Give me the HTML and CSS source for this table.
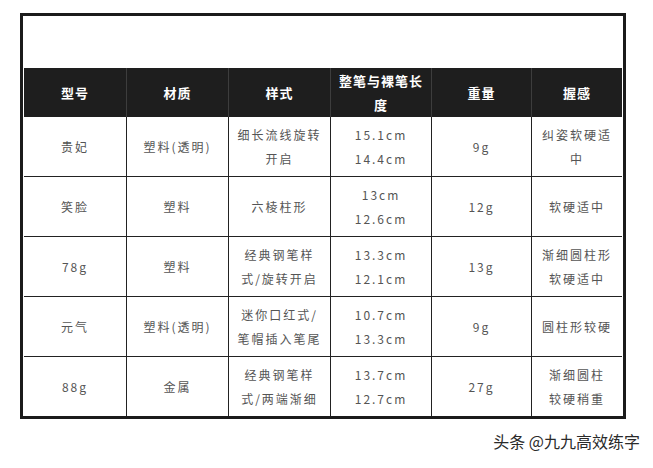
FILE: index.html
```html
<!DOCTYPE html>
<html lang="zh-CN">
<head>
<meta charset="utf-8">
<title>笔型对比</title>
<link rel="stylesheet" href="styles.css">
</head>
<body>
<div class="frame">
  <table class="spec">
    <thead>
      <tr>
        <th class="c1">型号</th>
        <th class="c2">材质</th>
        <th class="c3">样式</th>
        <th class="c4">整笔与裸笔长<br>度</th>
        <th class="c5">重量</th>
        <th class="c6">握感</th>
      </tr>
    </thead>
    <tbody>
      <tr>
        <td>贵妃</td>
        <td>塑料(透明)</td>
        <td>细长流线旋转<br>开启</td>
        <td class="num">15.1cm<br>14.4cm</td>
        <td class="num">9g</td>
        <td>纠姿软硬适<br>中</td>
      </tr>
      <tr>
        <td>笑脸</td>
        <td>塑料</td>
        <td>六棱柱形</td>
        <td class="num">13cm<br>12.6cm</td>
        <td class="num">12g</td>
        <td>软硬适中</td>
      </tr>
      <tr>
        <td class="num">78g</td>
        <td>塑料</td>
        <td>经典钢笔样<br>式/旋转开启</td>
        <td class="num">13.3cm<br>12.1cm</td>
        <td class="num">13g</td>
        <td>渐细圆柱形<br>软硬适中</td>
      </tr>
      <tr>
        <td>元气</td>
        <td>塑料(透明)</td>
        <td>迷你口红式/<br>笔帽插入笔尾</td>
        <td class="num">10.7cm<br>13.3cm</td>
        <td class="num">9g</td>
        <td>圆柱形较硬</td>
      </tr>
      <tr class="last">
        <td class="num">88g</td>
        <td>金属</td>
        <td>经典钢笔样<br>式/两端渐细</td>
        <td class="num">13.7cm<br>12.7cm</td>
        <td class="num">27g</td>
        <td>渐细圆柱<br>较硬稍重</td>
      </tr>
    </tbody>
  </table>
</div>
<div class="credit">头条 @九九高效练字</div>
</body>
</html>
```

FILE: styles.css
```css
html, body {
  margin: 0;
  padding: 0;
  background: #ffffff;
}

body {
  width: 653px;
  height: 468px;
  font-family: "Noto Sans CJK SC", "Noto Sans", sans-serif;
}

.frame {
  margin: 13px 0 0 20px;
  width: 598px;
  height: 348px;
  padding: 52px 1px 0;
  border: 3px solid #1b1b1b;
}

.spec {
  width: 598px;
  table-layout: fixed;
  border-collapse: separate;
  border-spacing: 0;
}

.spec th,
.spec td {
  box-sizing: border-box;
  padding: 0;
  text-align: center;
  vertical-align: middle;
}

.spec th {
  height: 49px;
  background: #1e1e1e;
  color: #ffffff;
  font-size: 13px;
  font-weight: 700;
  letter-spacing: 1px;
  line-height: 24px;
  border-right: 1px solid #3d3d3d;
}

.spec th:last-child {
  border-right: none;
}

.c1 { width: 103px; }
.c2 { width: 102px; }
.c3 { width: 102px; }
.c4 { width: 101px; }
.c5 { width: 100px; }
.c6 { width: 90px; }

.spec td {
  height: 60px;
  color: #555555;
  font-size: 12px;
  letter-spacing: 2px;
  line-height: 24px;
  border-right: 1px solid #222222;
  border-bottom: 1px solid #222222;
}

.spec td:last-child {
  border-right: none;
}

.spec tr.last td {
  height: 59px;
  border-bottom: none;
}

.spec td.num {
  letter-spacing: 2px;
}

.credit {
  margin-top: 12px;
  padding-right: 13px;
  text-align: right;
  font-size: 16px;
  line-height: 20px;
  color: #2a2a2a;
}
```
